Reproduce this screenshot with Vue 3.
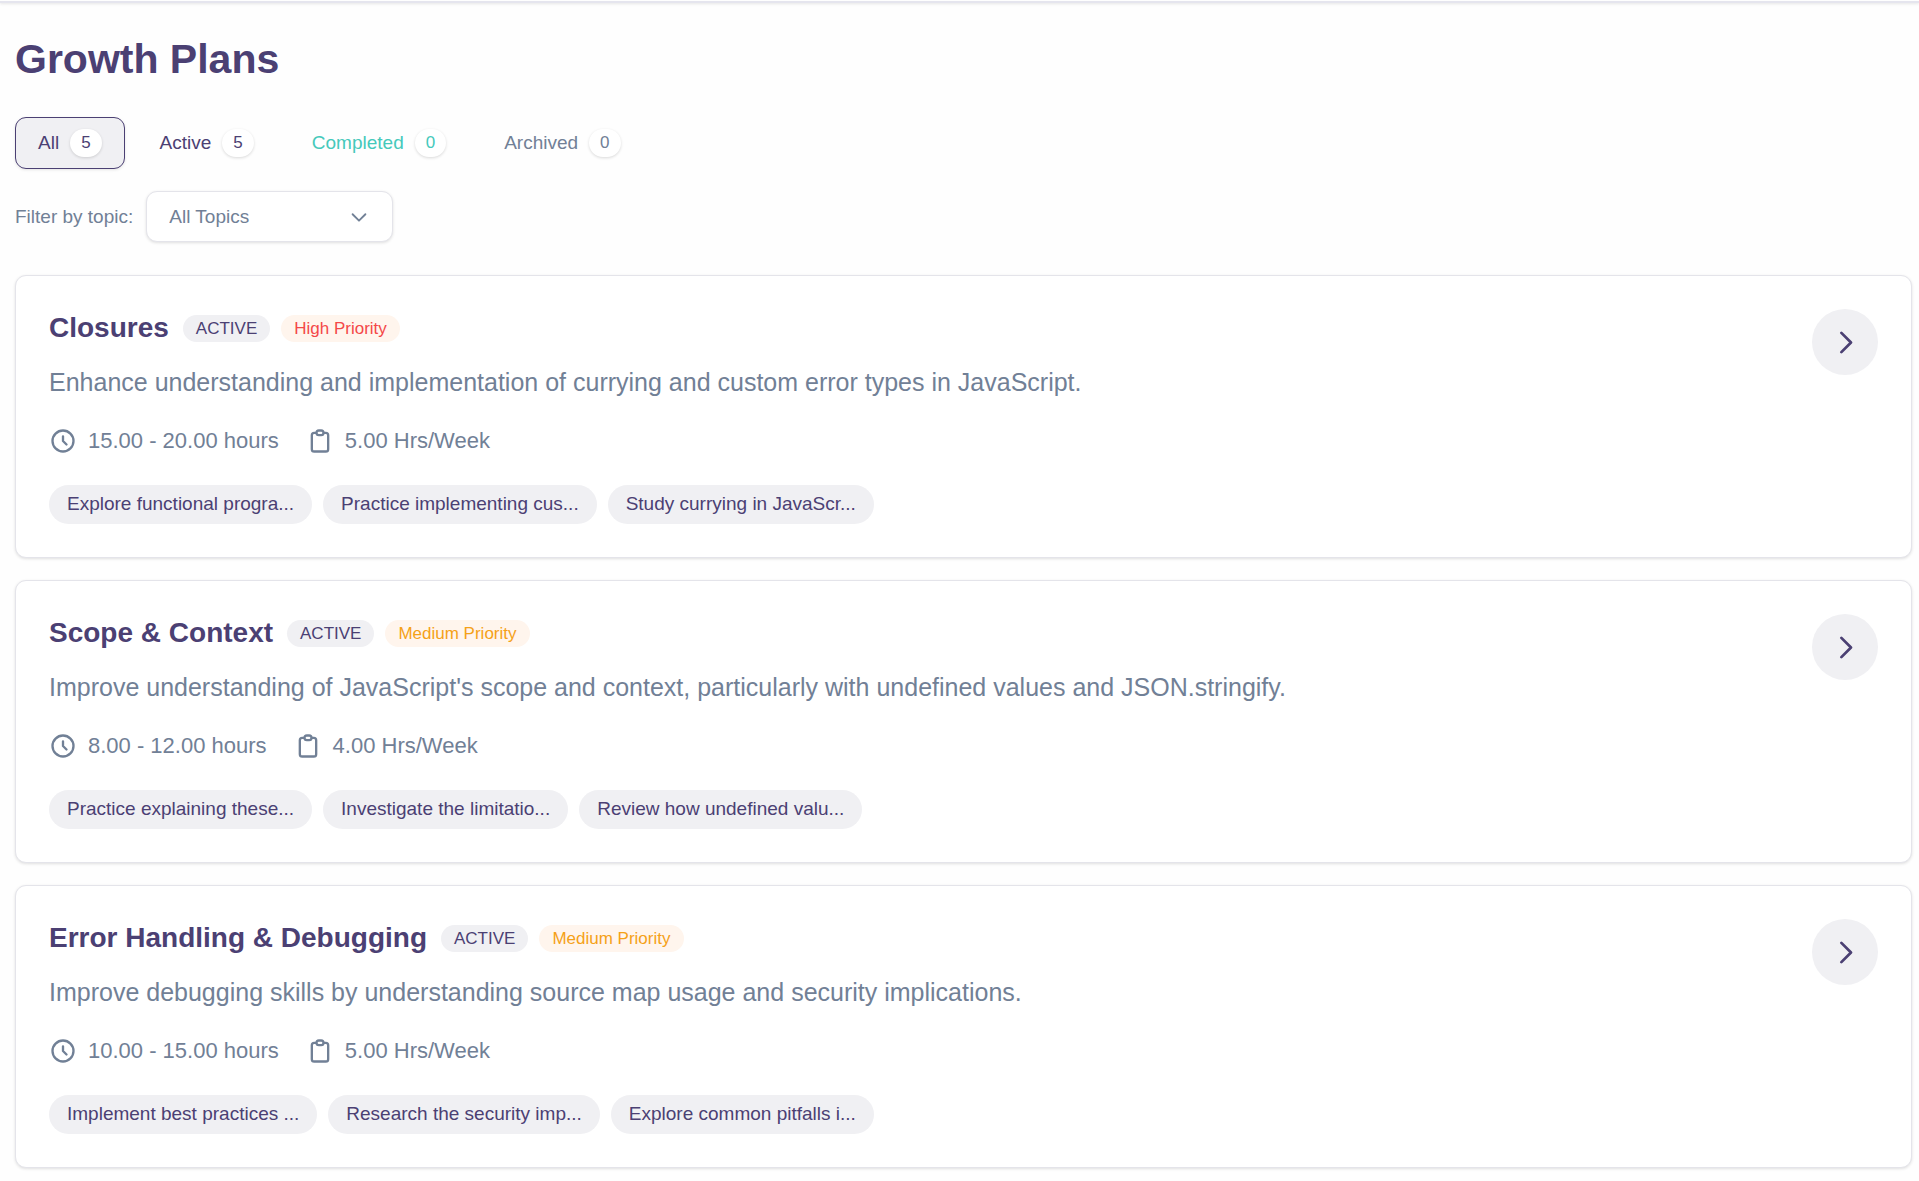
<script setup>
import { ref } from 'vue'

const tabs = [
  { id: 'all', label: 'All', count: 5 },
  { id: 'active', label: 'Active', count: 5 },
  { id: 'completed', label: 'Completed', count: 0 },
  { id: 'archived', label: 'Archived', count: 0 },
]
const current = ref('all')
const topic = ref('All Topics')

const plans = [
  {
    title: 'Closures',
    priority: 'High',
    summary: 'Enhance understanding and implementation of currying and custom error types in JavaScript.',
    hours: '15.00 - 20.00 hours',
    pace: '5.00 Hrs/Week',
    steps: ['Explore functional progra...', 'Practice implementing cus...', 'Study currying in JavaScr...'],
  },
  {
    title: 'Scope & Context',
    priority: 'Medium',
    summary: "Improve understanding of JavaScript's scope and context, particularly with undefined values and JSON.stringify.",
    hours: '8.00 - 12.00 hours',
    pace: '4.00 Hrs/Week',
    steps: ['Practice explaining these...', 'Investigate the limitatio...', 'Review how undefined valu...'],
  },
  {
    title: 'Error Handling & Debugging',
    priority: 'Medium',
    summary: 'Improve debugging skills by understanding source map usage and security implications.',
    hours: '10.00 - 15.00 hours',
    pace: '5.00 Hrs/Week',
    steps: ['Implement best practices ...', 'Research the security imp...', 'Explore common pitfalls i...'],
  },
]
</script>

<template>
  <header class="topbar"></header>
  <main class="page">
    <h1>Growth Plans</h1>

    <nav class="tabs">
      <button
        v-for="tab in tabs"
        :key="tab.id"
        type="button"
        class="tab"
        :class="[tab.id, { selected: current === tab.id }]"
        @click="current = tab.id"
      >
        {{ tab.label }}
        <span class="count">{{ tab.count }}</span>
      </button>
    </nav>

    <div class="filter">
      <label for="topic">Filter by topic:</label>
      <div class="select">
        <select id="topic" v-model="topic">
          <option>All Topics</option>
          <option v-for="plan in plans" :key="plan.title">{{ plan.title }}</option>
        </select>
        <svg viewBox="0 0 24 24" aria-hidden="true"><path d="M19 9l-7 7-7-7" /></svg>
      </div>
    </div>

    <section class="plans">
      <article v-for="plan in plans" :key="plan.title" class="card">
        <div class="body">
          <div class="heading">
            <h2>{{ plan.title }}</h2>
            <div class="badges">
              <span class="badge">ACTIVE</span>
              <span class="badge" :class="plan.priority.toLowerCase()">{{ plan.priority }} Priority</span>
            </div>
          </div>
          <p class="summary">{{ plan.summary }}</p>
          <div class="meta">
            <span class="fact">
              <svg viewBox="0 0 24 24" aria-hidden="true"><path d="M12 8v4l3 3m6-3a9 9 0 11-18 0 9 9 0 0118 0z" /></svg>
              {{ plan.hours }}
            </span>
            <span class="fact">
              <svg viewBox="0 0 24 24" aria-hidden="true"><path d="M9 5H7a2 2 0 00-2 2v12a2 2 0 002 2h10a2 2 0 002-2V7a2 2 0 00-2-2h-2M9 5a2 2 0 002 2h2a2 2 0 002-2M9 5a2 2 0 012-2h2a2 2 0 012 2" /></svg>
              {{ plan.pace }}
            </span>
          </div>
          <ul class="steps">
            <li v-for="step in plan.steps" :key="step">{{ step }}</li>
          </ul>
        </div>
        <button type="button" class="open" :aria-label="'Open ' + plan.title">
          <svg viewBox="0 0 24 24" aria-hidden="true"><path d="M9 5l7 7-7 7" /></svg>
        </button>
      </article>
    </section>
  </main>
</template>

<style>
body {
  background: #fefefe;
}
</style>

<style scoped>
* {
  box-sizing: border-box;
  margin: 0;
}

.topbar {
  height: 3px;
  border-bottom: 2px solid #e5e5ee;
  box-shadow: 0 1px 3px rgba(0, 0, 0, 0.1);
}

.page {
  padding: 31px 7px 13px 15px;
  font-family: "Liberation Sans", Arial, sans-serif;
  font-size: 19px;
  line-height: 28px;
  color: #718096;
}

button,
select {
  font: inherit;
  color: inherit;
}

svg {
  fill: none;
  stroke: currentColor;
  stroke-width: 2;
  stroke-linecap: round;
  stroke-linejoin: round;
}

h1 {
  font-size: 41px;
  line-height: 50px;
  color: #4b4073;
}

.tabs {
  display: flex;
  gap: 12px;
  margin-top: 33px;
}

.tab {
  display: flex;
  align-items: center;
  gap: 11px;
  height: 52px;
  padding: 0 22px;
  border: 1px solid transparent;
  border-radius: 11px;
  background: none;
}

.tab.all,
.tab.active {
  color: #4b4073;
}

.tab.completed {
  color: #45c9bb;
}

.tab.selected {
  border-color: #4b4073;
  background: #f0f0f3;
  box-shadow: 0 1px 3px rgba(0, 0, 0, 0.1);
}

.count {
  padding: 3px 11px;
  border-radius: 14px;
  background: #fff;
  font-size: 17px;
  line-height: 22px;
  box-shadow: 0 1px 3px rgba(0, 0, 0, 0.15);
}

.filter {
  display: flex;
  align-items: center;
  gap: 13px;
  margin-top: 22px;
}

.select {
  display: grid;
  grid-template-columns: minmax(0, 1fr);
  align-items: center;
  width: 247px;
}

.select > * {
  grid-area: 1 / 1;
}

.select select {
  width: 100%;
  height: 51px;
  padding: 0 22px;
  border: 1px solid #e4e4ea;
  border-radius: 11px;
  appearance: none;
  background: #fff;
  box-shadow: 0 1px 3px rgba(0, 0, 0, 0.12);
}

.select svg {
  justify-self: end;
  width: 22px;
  height: 22px;
  margin-right: 23px;
  pointer-events: none;
}

.plans {
  display: grid;
  gap: 22px;
  margin-top: 33px;
}

.card {
  display: flex;
  align-items: flex-start;
  justify-content: space-between;
  padding: 33px;
  border: 1px solid #e4e4ea;
  border-radius: 11px;
  background: #fff;
  box-shadow: 0 1px 3px rgba(0, 0, 0, 0.12);
}

.heading {
  display: flex;
  align-items: center;
  gap: 14px;
}

h2 {
  font-size: 28px;
  line-height: 38px;
  color: #4b4073;
}

.badges {
  display: flex;
  gap: 11px;
}

.badge {
  padding: 2px 13px;
  border-radius: 14px;
  background: #f0f0f3;
  color: #4b4073;
  font-size: 17px;
  line-height: 23px;
}

.badge.high {
  background: #fff5ed;
  color: #f44848;
}

.badge.medium {
  background: #fff5ed;
  color: #f5a118;
}

.summary {
  margin-top: 16px;
  font-size: 25px;
  line-height: 38px;
}

.meta {
  display: flex;
  gap: 27px;
  margin-top: 23px;
  font-size: 22px;
  line-height: 33px;
}

.fact {
  display: flex;
  align-items: center;
  gap: 11px;
}

.fact svg {
  width: 28px;
  height: 28px;
}

.steps {
  display: flex;
  gap: 11px;
  margin-top: 28px;
  padding: 0;
  list-style: none;
}

.steps li {
  padding: 5px 18px 6px;
  border-radius: 20px;
  background: #f0f0f3;
  color: #4b4073;
}

.open {
  display: grid;
  place-items: center;
  flex: none;
  width: 66px;
  height: 66px;
  padding: 0;
  border: 0;
  border-radius: 50%;
  background: #f0f0f3;
  color: #4b4073;
}

.open svg {
  width: 33px;
  height: 33px;
}
</style>
